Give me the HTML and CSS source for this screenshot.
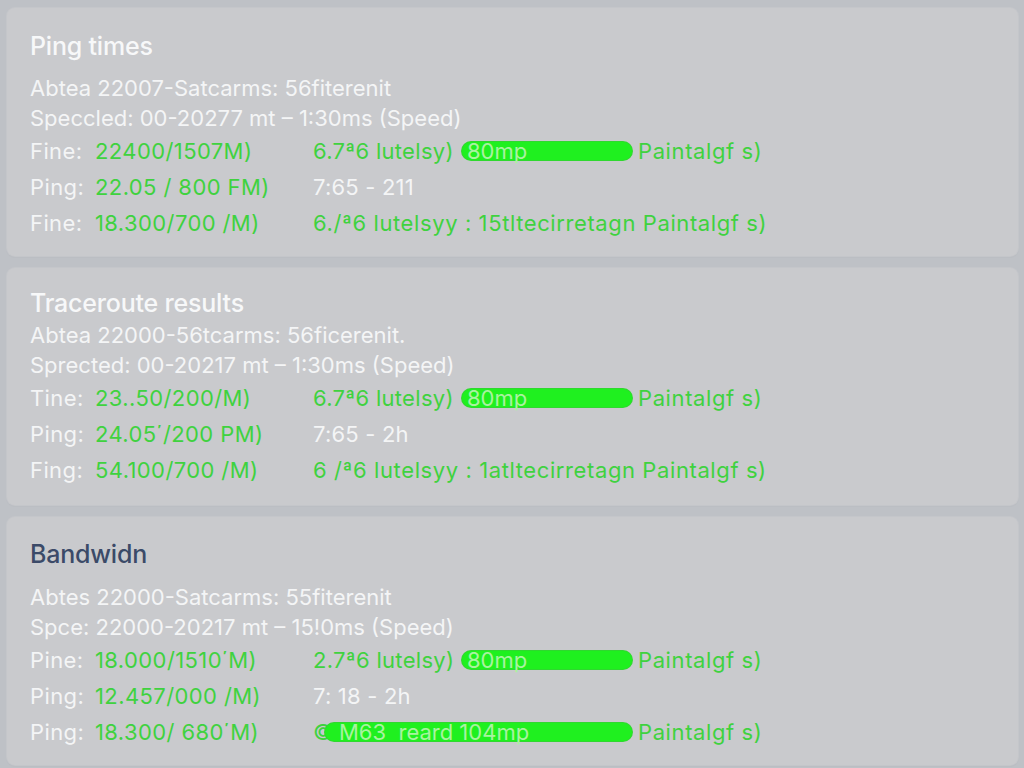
FILE: index.html
```html
<!DOCTYPE html>
<html lang="en">
<head>
    <meta charset="UTF-8">
    <meta name="viewport" content="width=device-width, initial-scale=1.0">
    <title>Network Diagnostics</title>
    <link rel="stylesheet" href="styles.css">
</head>
<body>
    <div class="panel panel-ping">
        <h2>Ping times</h2>
        <p class="info">Abtea 22007-Satcarms: 56fiterenit</p>
        <p class="info">Speccled: 00-20277 mt – 1:30ms (Speed)</p>
        <div class="row">
            <span class="label">Fine:</span>
            <span class="value">22400/1507M)</span>
            <span class="detail"><span class="lead">6.7ª6 lutelsy)</span><span class="bar"><span>80mp</span></span><span class="tail">Paintalgf s)</span></span>
        </div>
        <div class="row">
            <span class="label">Ping:</span>
            <span class="value">22.05 / 800 FM)</span>
            <span class="detail plain">7:65 - 211</span>
        </div>
        <div class="row">
            <span class="label">Fine:</span>
            <span class="value">18.300/700 /M)</span>
            <span class="detail">6./ª6 lutelsyy : 15tltecirretagn Paintalgf s)</span>
        </div>
    </div>

    <div class="panel panel-trace">
        <h2>Traceroute results</h2>
        <p class="info">Abtea 22000-56tcarms: 56ficerenit.</p>
        <p class="info">Sprected: 00-20217 mt – 1:30ms (Speed)</p>
        <div class="row">
            <span class="label">Tine:</span>
            <span class="value">23..50/200/M)</span>
            <span class="detail"><span class="lead">6.7ª6 lutelsy)</span><span class="bar"><span>80mp</span></span><span class="tail">Paintalgf s)</span></span>
        </div>
        <div class="row">
            <span class="label">Ping:</span>
            <span class="value">24.05΄/200 PM)</span>
            <span class="detail plain">7:65 - 2h</span>
        </div>
        <div class="row">
            <span class="label">Fing:</span>
            <span class="value">54.100/700 /M)</span>
            <span class="detail">6 /ª6 lutelsyy : 1atltecirretagn Paintalgf s)</span>
        </div>
    </div>

    <div class="panel panel-band">
        <h2 class="dark">Bandwidn</h2>
        <p class="info">Abtes 22000-Satcarms: 55fiterenit</p>
        <p class="info">Spce: 22000-20217 mt – 15!0ms (Speed)</p>
        <div class="row">
            <span class="label">Pine:</span>
            <span class="value">18.000/1510΄M)</span>
            <span class="detail"><span class="lead">2.7ª6 lutelsy)</span><span class="bar"><span>80mp</span></span><span class="tail">Paintalgf s)</span></span>
        </div>
        <div class="row">
            <span class="label">Ping:</span>
            <span class="value">12.457/000 /M)</span>
            <span class="detail plain">7: 18 - 2h</span>
        </div>
        <div class="row">
            <span class="label">Ping:</span>
            <span class="value">18.300/ 680΄M)</span>
            <span class="detail"><span class="lead short">©</span><span class="bar bar-wide"><span>M63  reard 104mp</span></span><span class="tail">Paintalgf s)</span></span>
        </div>
    </div>
</body>
</html>
```

FILE: styles.css
```css
body {
    margin: 0;
    padding: 8px 6px 0 7px;
    font-family: Inter, "Open Sans", sans-serif;
    background-color: #bec1c6;
    color: #f4f5f6;
    height: 768px;
    box-sizing: border-box;
    overflow: hidden;
    display: flex;
    flex-direction: column;
    gap: 12px;
}

.panel {
    background-color: #c9cacd;
    border-radius: 8px;
    padding: 20px 23px 15px;
    box-shadow: 0 0 0 1px #c4c6ca, 0 1px 2px rgba(0, 0, 0, 0.06);
}

.panel h2 {
    margin: 0;
    font-size: 25px;
    font-weight: 500;
    line-height: 30px;
    color: #f7f8f9;
    letter-spacing: -0.2px;
}

.panel h2.dark {
    color: #3b4a68;
}

.panel-ping {
    padding-top: 23px;
}

.panel-ping h2 {
    margin-bottom: 12px;
}

.panel-trace {
    padding-bottom: 17px;
}

.panel-trace h2 {
    margin-bottom: 2px;
}

.panel-band {
    padding-top: 22px;
}

.panel-band h2 {
    margin-bottom: 13px;
}

.info {
    margin: 0;
    font-size: 22px;
    line-height: 30px;
    white-space: nowrap;
}

.row {
    display: grid;
    grid-template-columns: 65px 218px auto;
    height: 36px;
    align-items: center;
    font-size: 22px;
    white-space: nowrap;
}

.row .label {
    letter-spacing: 0.4px;
}

.row .value {
    color: #3fd23f;
    letter-spacing: 0.4px;
}

.row .detail {
    display: flex;
    align-items: center;
    color: #3fd23f;
    letter-spacing: 0.6px;
    white-space: pre;
}

.row .detail.plain {
    color: #f4f5f6;
    letter-spacing: 0.2px;
}

.lead {
    width: 149px;
    letter-spacing: 0.3px;
}

.lead.short {
    width: 12px;
}

.tail {
    margin-left: 6px;
}

.bar {
    width: 170px;
    height: 18px;
    border-radius: 9px;
    background-color: #1ff01f;
    box-shadow: 0 0 0 1px #2fd82f;
    line-height: 18px;
}

.bar span {
    display: block;
    padding-left: 5px;
    color: #a9f3a0;
    letter-spacing: 0;
}

.bar-wide {
    width: 307px;
}

.bar-wide span {
    padding-left: 14px;
}
```
